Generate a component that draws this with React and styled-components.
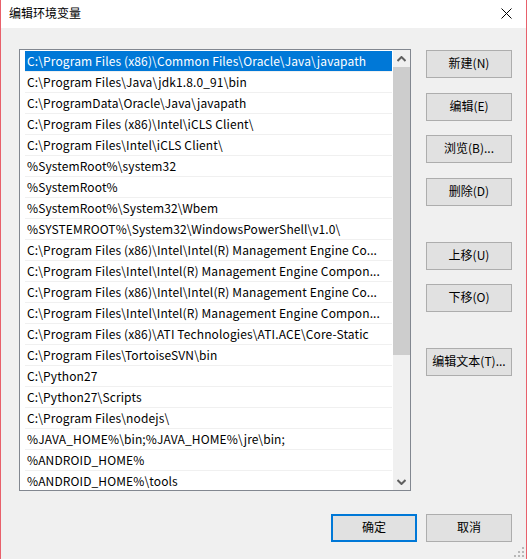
import styled, { createGlobalStyle } from 'styled-components';

const GlobalStyle = createGlobalStyle`
  html, body {
    margin: 0;
    padding: 0;
    background: #f0f0f0;
  }
  body {
    font-family: "Noto Sans CJK SC", "Noto Sans", sans-serif;
    font-size: 12px;
    color: #000;
  }
`;

const paths = [
  'C:\\Program Files (x86)\\Common Files\\Oracle\\Java\\javapath',
  'C:\\Program Files\\Java\\jdk1.8.0_91\\bin',
  'C:\\ProgramData\\Oracle\\Java\\javapath',
  'C:\\Program Files (x86)\\Intel\\iCLS Client\\',
  'C:\\Program Files\\Intel\\iCLS Client\\',
  '%SystemRoot%\\system32',
  '%SystemRoot%',
  '%SystemRoot%\\System32\\Wbem',
  '%SYSTEMROOT%\\System32\\WindowsPowerShell\\v1.0\\',
  'C:\\Program Files (x86)\\Intel\\Intel(R) Management Engine Co...',
  'C:\\Program Files\\Intel\\Intel(R) Management Engine Compon...',
  'C:\\Program Files (x86)\\Intel\\Intel(R) Management Engine Co...',
  'C:\\Program Files\\Intel\\Intel(R) Management Engine Compon...',
  'C:\\Program Files (x86)\\ATI Technologies\\ATI.ACE\\Core-Static',
  'C:\\Program Files\\TortoiseSVN\\bin',
  'C:\\Python27',
  'C:\\Python27\\Scripts',
  'C:\\Program Files\\nodejs\\',
  '%JAVA_HOME%\\bin;%JAVA_HOME%\\jre\\bin;',
  '%ANDROID_HOME%',
  '%ANDROID_HOME%\\tools',
];

const sideButtons = [
  { label: '新建(N)', top: 0 },
  { label: '编辑(E)', top: 15 },
  { label: '浏览(B)...', top: 14 },
  { label: '删除(D)', top: 15 },
  { label: '上移(U)', top: 36 },
  { label: '下移(O)', top: 14 },
  { label: '编辑文本(T)...', top: 36 },
];

export default function App() {
  return (
    <>
      <GlobalStyle />
      <Window>
        <TitleBar>
          <Title>编辑环境变量</Title>
          <CloseButton>
            <svg width="11" height="11" viewBox="0 0 11 11">
              <path d="M0.5 0.5 L10.5 10.5 M10.5 0.5 L0.5 10.5" stroke="#000" strokeWidth="1" fill="none" />
            </svg>
          </CloseButton>
        </TitleBar>
        <Body>
          <Main>
            <ListBox>
              <Rows>
                {paths.map((p, i) => (
                  <Row key={i} $selected={i === 0}>
                    {p}
                  </Row>
                ))}
              </Rows>
              <ScrollBar>
                <Arrow>
                  <svg width="9" height="6" viewBox="0 0 9 6">
                    <path d="M0.5 5 L4.5 1 L8.5 5" stroke="#606060" strokeWidth="2" fill="none" />
                  </svg>
                </Arrow>
                <Track>
                  <Thumb />
                </Track>
                <Arrow>
                  <svg width="9" height="6" viewBox="0 0 9 6">
                    <path d="M0.5 1 L4.5 5 L8.5 1" stroke="#606060" strokeWidth="2" fill="none" />
                  </svg>
                </Arrow>
              </ScrollBar>
            </ListBox>
            <SideColumn>
              {sideButtons.map((b) => (
                <Button key={b.label} $top={b.top}>
                  {b.label}
                </Button>
              ))}
            </SideColumn>
          </Main>
          <Footer>
            <Button $primary>确定</Button>
            <Button>取消</Button>
          </Footer>
        </Body>
        <Grip>
          <svg width="10" height="10" viewBox="0 0 10 10">
            <g fill="#b8b8b8">
              <rect x="8" y="0" width="2" height="2" />
              <rect x="4" y="4" width="2" height="2" />
              <rect x="8" y="4" width="2" height="2" />
              <rect x="0" y="8" width="2" height="2" />
              <rect x="4" y="8" width="2" height="2" />
              <rect x="8" y="8" width="2" height="2" />
            </g>
          </svg>
        </Grip>
      </Window>
    </>
  );
}

const Window = styled.div`
  position: relative;
  width: 527px;
  height: 559px;
  box-sizing: border-box;
  border-left: 1px solid #e8606b;
  border-right: 1px solid #e8606b;
  background: #f0f0f0;
  display: flex;
  flex-direction: column;
`;

const TitleBar = styled.div`
  height: 28px;
  background: #fff;
  display: flex;
  align-items: center;
  justify-content: space-between;
  padding: 0 14px 0 8px;
  flex-shrink: 0;
`;

const Title = styled.div`
  font-size: 12px;
  line-height: 14px;
  margin-top: -2px;
`;

const CloseButton = styled.div`
  display: flex;
  align-items: center;
  margin-top: -2px;
`;

const Body = styled.div`
  display: flex;
  flex-direction: column;
  padding: 21px 14px 0 18px;
`;

const Main = styled.div`
  display: flex;
  gap: 15px;
`;

const ListBox = styled.div`
  width: 392px;
  height: 442px;
  box-sizing: border-box;
  border: 1px solid #828790;
  background: #fff;
  display: flex;
  padding: 1px 0 0 5px;
  overflow: hidden;
`;

const Rows = styled.div`
  flex: 1;
  display: flex;
  flex-direction: column;
  overflow: hidden;
`;

const Row = styled.div`
  height: 20px;
  flex-shrink: 0;
  line-height: 20px;
  border-bottom: 1px solid #f0f0f0;
  padding-left: 2px;
  white-space: nowrap;
  overflow: hidden;
  letter-spacing: 0.12px;
  background: ${(p) => (p.$selected ? '#0078d7' : '#fff')};
  color: ${(p) => (p.$selected ? '#fff' : '#000')};
`;

const ScrollBar = styled.div`
  width: 17px;
  margin-top: -1px;
  margin-left: 1px;
  background: #f0f0f0;
  display: flex;
  flex-direction: column;
`;

const Arrow = styled.div`
  height: 17px;
  display: flex;
  align-items: center;
  justify-content: center;
`;

const Track = styled.div`
  flex: 1;
`;

const Thumb = styled.div`
  height: 288px;
  background: #cdcdcd;
`;

const SideColumn = styled.div`
  display: flex;
  flex-direction: column;
  padding-top: 1px;
`;

const Button = styled.div`
  width: 86px;
  height: 28px;
  box-sizing: border-box;
  margin-top: ${(p) => p.$top || 0}px;
  padding-bottom: 3px;
  background: #e1e1e1;
  border: ${(p) => (p.$primary ? '2px solid #0078d7' : '1px solid #adadad')};
  display: flex;
  align-items: center;
  justify-content: center;
  font-size: 12px;
  line-height: 14px;
  white-space: nowrap;
`;

const Footer = styled.div`
  display: flex;
  justify-content: flex-end;
  gap: 9px;
  margin-top: 23px;
`;

const Grip = styled.div`
  position: absolute;
  right: 2px;
  bottom: 2px;
  display: flex;
`;
